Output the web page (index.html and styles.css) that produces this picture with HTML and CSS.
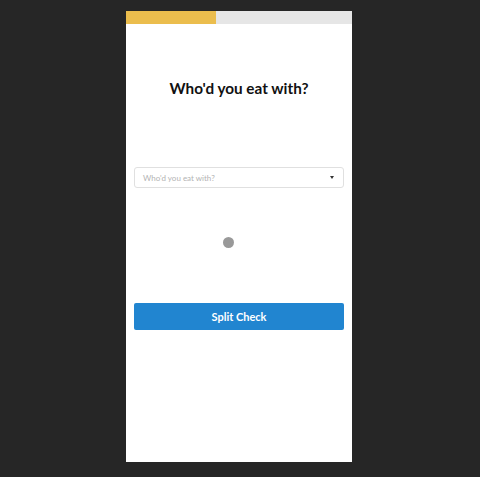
FILE: index.html
```html
<!DOCTYPE html>
<html>
<head>
<meta charset="utf-8">
<link rel="stylesheet" href="styles.css">
</head>
<body>
<div class="card">
  <div class="progress"><div class="progress-fill" style="width:40%"></div></div>
  <div class="content">
    <h1 class="title">Who'd you eat with?</h1>
    <div class="select">
      <span class="placeholder">Who'd you eat with?</span>
      <span class="caret"></span>
    </div>
    <div class="loader-area"><div class="dot"></div></div>
    <button class="btn">Split Check</button>
  </div>
</div>
</body>
</html>
```
FILE: styles.css
```css
html, body {
  margin: 0;
  padding: 0;
  background: #262626;
  font-family: Lato, "Liberation Sans", sans-serif;
}
.card {
  margin: 11px 0 0 126px;
  width: 226px;
  height: 451px;
  background: #fff;
  display: flex;
  flex-direction: column;
}
.progress {
  height: 13px;
  background: #e6e6e6;
}
.progress-fill {
  height: 100%;
  background: #ebbd4d;
}
.content {
  padding: 0 8px;
  display: flex;
  flex-direction: column;
}
.title {
  margin: 53px 0 0;
  font-size: 15.3px;
  line-height: 22px;
  font-weight: 700;
  color: #111;
  text-align: center;
}
.select {
  margin-top: 68px;
  height: 19px;
  border: 1px solid #e0e0e0;
  border-radius: 3px;
  display: flex;
  align-items: center;
  justify-content: space-between;
  padding: 0 9px 0 8px;
}
.placeholder {
  font-size: 8px;
  color: #b3b3b3;
}
.caret {
  width: 0;
  height: 0;
  border-left: 2.5px solid transparent;
  border-right: 2.5px solid transparent;
  border-top: 3px solid #333;
}
.loader-area {
  height: 115px;
  box-sizing: border-box;
  padding: 49px 22px 0 0;
  display: flex;
  align-items: flex-start;
  justify-content: center;
}
.dot {
  width: 11px;
  height: 11px;
  border-radius: 50%;
  background: #999;
}
.btn {
  height: 27px;
  border: none;
  border-radius: 2px;
  background: #2185d0;
  color: #fff;
  font-family: Lato, "Liberation Sans", sans-serif;
  font-size: 11px;
  font-weight: 700;
  padding: 0;
  cursor: pointer;
}
```
